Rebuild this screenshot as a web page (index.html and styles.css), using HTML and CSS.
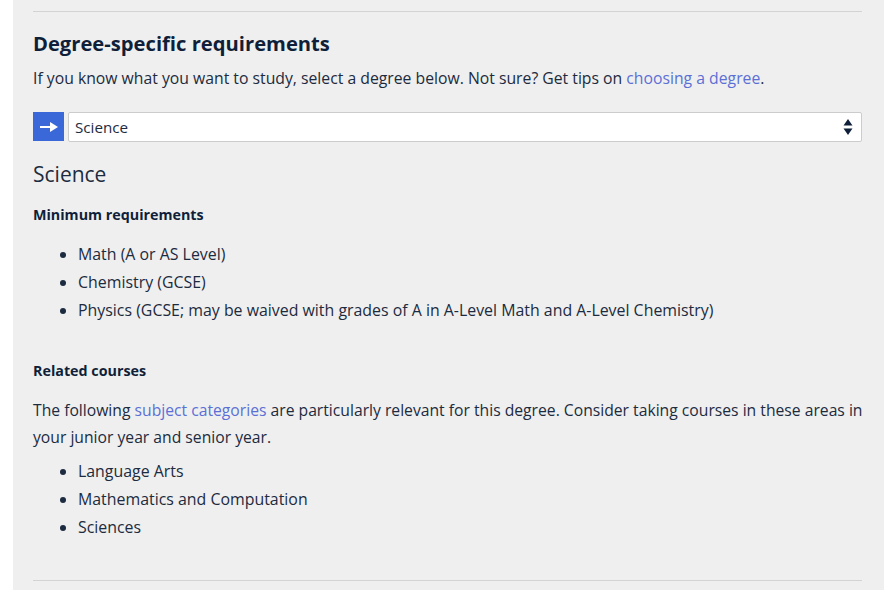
FILE: index.html
```html
<!DOCTYPE html>
<html>
<head>
<meta charset="utf-8">
<link rel="stylesheet" href="styles.css">
</head>
<body>
<div class="panel">
  <section class="section">
    <h2 class="title">Degree-specific requirements</h2>
    <p class="intro">If you know what you want to study, select a degree below. Not sure? Get tips on <a class="link" href="#">choosing a degree</a>.</p>
    <div class="picker">
      <button class="go" type="button">
        <svg width="20" height="12" viewBox="0 0 20 12"><path d="M1 6h11" stroke="#fff" stroke-width="2"/><path d="M11 1l8 5-8 5z" fill="#fff"/></svg>
      </button>
      <div class="select">
        <span>Science</span>
        <svg class="arrows" width="10" height="18" viewBox="0 0 10 18"><path d="M5 1l4.5 6.5h-9z" fill="#0f1f3a"/><path d="M5 17l4.5-6.5h-9z" fill="#0f1f3a"/></svg>
      </div>
    </div>
    <h3 class="degree">Science</h3>
    <h4 class="sub">Minimum requirements</h4>
    <ul class="list">
      <li>Math (A or AS Level)</li>
      <li>Chemistry (GCSE)</li>
      <li>Physics (GCSE; may be waived with grades of A in A-Level Math and A-Level Chemistry)</li>
    </ul>
    <h4 class="sub sub-related">Related courses</h4>
    <p class="body">The following <a class="link" href="#">subject categories</a> are particularly relevant for this degree. Consider taking courses in these areas in your junior year and senior year.</p>
    <ul class="list list-last">
      <li>Language Arts</li>
      <li>Mathematics and Computation</li>
      <li>Sciences</li>
    </ul>
  </section>
  <div class="rule"></div>
</div>
</body>
</html>
```

FILE: styles.css
```css
html, body {
  margin: 0;
  padding: 0;
  background: #ffffff;
}
body {
  font-family: "Open Sans", "Liberation Sans", sans-serif;
  color: #1c2b40;
  height: 590px;
  overflow: hidden;
}
.panel {
  margin-left: 13px;
  background: #efefef;
  padding: 11px 22px 10px 20px;
  min-height: 590px;
  box-sizing: border-box;
}
.section {
  border-top: 1px solid #d3d3d3;
  padding-top: 16px;
}
.title {
  margin: 0;
  font-size: 20.2px;
  line-height: 30px;
  font-weight: 700;
  color: #0f1f3a;
}
.intro {
  margin: 8px 0 0;
  font-size: 15.75px;
  line-height: 24px;
}
.link {
  color: #5b6fd6;
  text-decoration: none;
}
.picker {
  display: flex;
  gap: 4px;
  margin-top: 22px;
  height: 30px;
}
.go {
  width: 31px;
  height: 29px;
  border: 0;
  padding: 0;
  background: #3b68d9;
  display: flex;
  align-items: center;
  justify-content: center;
}
.select {
  flex: 1;
  height: 28px;
  background: #ffffff;
  border: 1px solid #cccccc;
  border-radius: 2px;
  display: flex;
  align-items: center;
  justify-content: space-between;
  padding: 0 8px 0 6px;
  font-size: 15.2px;
}
.degree {
  margin: 17px 0 0;
  font-size: 21px;
  line-height: 30px;
  font-weight: 400;
}
.sub {
  margin: 16px 0 0;
  font-size: 14.3px;
  line-height: 20px;
  font-weight: 700;
  color: #0f1f3a;
}
.list {
  margin: 15px 0 0;
  padding-left: 45px;
  font-size: 15.9px;
  line-height: 28px;
}
.sub-related {
  margin-top: 37px;
}
.body {
  margin: 16px -8px 0 0;
  font-size: 15.7px;
  line-height: 27px;
}
.list-last {
  margin-top: 6px;
}
.rule {
  border-top: 1px solid #d3d3d3;
  margin-top: 39px;
}
```
